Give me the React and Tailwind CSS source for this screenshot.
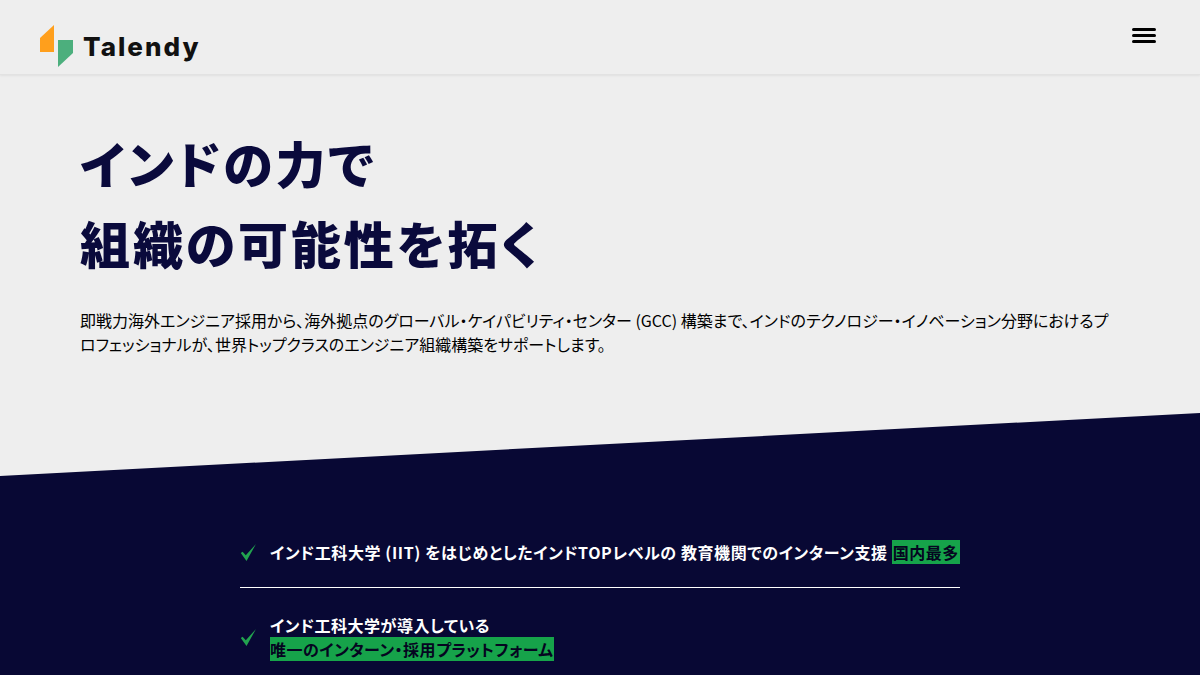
function Logo() {
  return (
    <div className="flex items-center">
      <svg className="w-[34px] h-[44px]" viewBox="0 0 34 44">
        <polygon points="0,14 14,1 14,28 0,28" fill="#ff9f1c" />
        <polygon points="18,16 33,16 33,29 18,43" fill="#4caf7d" />
      </svg>
      <span className="ml-[9px] mt-[2px] text-[26px] leading-none font-extrabold tracking-[2px] text-[#111] font-['Inter',sans-serif]">Talendy</span>
    </div>
  );
}

function Check() {
  return (
    <svg className="w-[16px] h-[17px] shrink-0" viewBox="0 0 16 17" fill="#22a34f">
      <path d="M0.8 9 L2.6 7.8 L5.8 11.2 L16 0 L6.5 17 Z" />
    </svg>
  );
}

export default function App() {
  return (
    <div className="h-screen overflow-hidden bg-[#eeeeee] font-['Noto_Sans_CJK_JP','Noto_Sans',sans-serif] [font-feature-settings:'palt']">
      <header className="h-[75px] border-b border-[#e2e2e2] shadow-[0_1px_2px_rgba(0,0,0,0.06)] flex justify-between pl-[40px] pr-[44px]">
        <div className="pt-[24px]">
          <Logo />
        </div>
        <button className="mt-[28px] w-[24px] h-[15px] flex flex-col justify-between">
          <span className="block h-[3px] bg-black rounded-sm"></span>
          <span className="block h-[3px] bg-black rounded-sm"></span>
          <span className="block h-[3px] bg-black rounded-sm"></span>
        </button>
      </header>

      <section className="px-[80px] pt-[47px]">
        <h1 className="text-[50px] leading-[80px] font-black tracking-[2.9px] text-[#0a0a3c]">
          インドの力で<br />組織の可能性を拓く
        </h1>
        <p className="mt-[26px] w-[1040px] text-[16px] leading-[24px] text-black">
          即戦力海外エンジニア採用から、海外拠点のグローバル・ケイパビリティ・センター (GCC) 構築まで、インドのテクノロジー・イノベーション分野におけるプロフェッショナルが、世界トップクラスのエンジニア組織構築をサポートします。
        </p>
      </section>

      <div className="mt-[57px] h-[63px] bg-[#080834] [clip-path:polygon(0_100%,100%_0,100%_100%)]"></div>
      <section className="bg-[#080834] h-[300px] pt-[64px]">
        <ul className="w-[720px] mx-auto text-white font-bold text-[16px] leading-[24px] tracking-[0.5px]">
          <li className="flex items-center gap-[14px] pb-[23px] border-b border-white">
            <Check />
            <p className="tracking-[0.58px]">
              インド工科大学 (IIT) をはじめとしたインドTOPレベルの 教育機関でのインターン支援 <span className="bg-[#16a34a] text-[#050520] px-px tracking-[0.5px]">国内最多</span>
            </p>
          </li>
          <li className="flex items-center gap-[14px] pt-[25px]">
            <Check />
            <p>
              インド工科大学が導入している<br />
              <span className="bg-[#16a34a] text-[#050520]">唯一のインターン・採用プラットフォーム</span>
            </p>
          </li>
        </ul>
      </section>
    </div>
  );
}
